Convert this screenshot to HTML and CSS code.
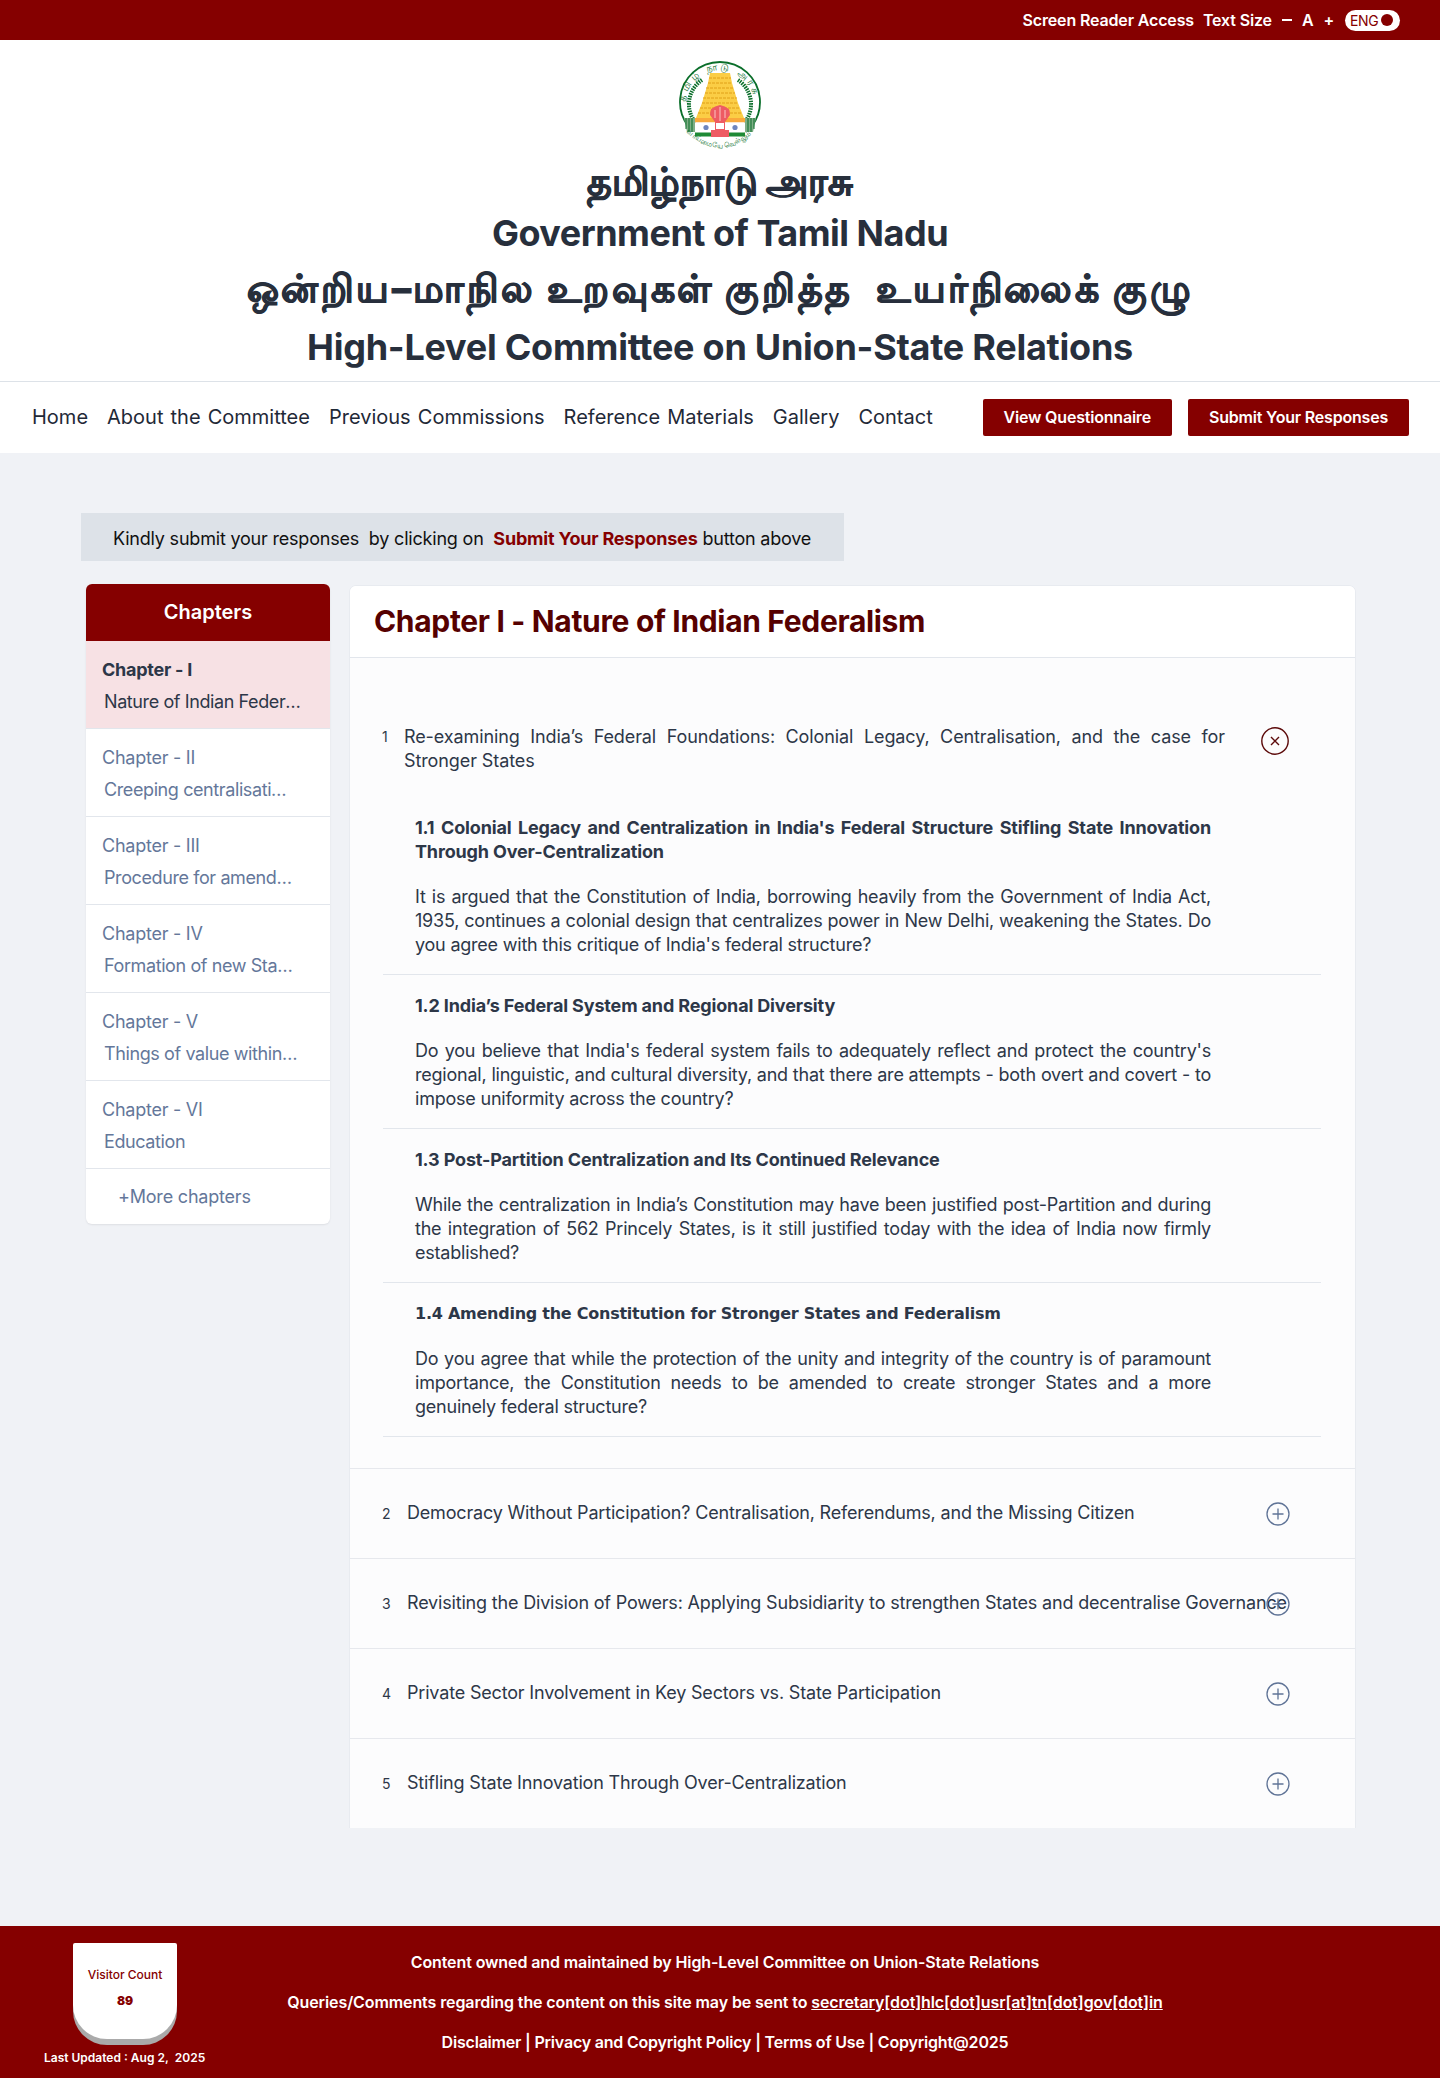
FILE: index.html
```html
<!DOCTYPE html>
<html lang="en">
<head>
  <meta charset="UTF-8">
  <meta name="viewport" content="width=device-width, initial-scale=1.0">
  <title>High-Level Committee on Union-State Relations</title>
  <link rel="stylesheet" href="styles.css">
</head>
<body>
  <div class="topbar">
    <a href="#">Screen Reader Access</a>
    <span class="size-label">Text Size</span>
    <span class="size-btn minus"></span>
    <span class="size-btn">A</span>
    <span class="size-btn">+</span>
    <span class="lang-toggle">ENG<i></i></span>
  </div>

  <header class="site-header">
    <svg class="emblem" viewBox="0 0 84 90" width="84" height="90" aria-hidden="true">
      <path d="M10 65 A40 40 0 1 1 74 65" fill="none" stroke="#0a6e2a" stroke-width="1.8"/>
      <path id="ring-top" d="M7 44 A35 35 0 0 1 77 44" fill="none"/>
      <text class="emblem-ring"><textPath href="#ring-top" startOffset="3%">தமிழ் நாடு அரசு</textPath></text>
      <path d="M15 58 A29 29 0 0 1 24 19 M69 58 A29 29 0 0 0 60 19" fill="none" stroke="#0a6e2a" stroke-width="4" stroke-dasharray="1.5 1"/>
      <path d="M6 57 H18 V71 H9 Z M66 57 H78 L75 71 H66 Z" fill="#7fae86"/>
      <path d="M8 57 V68 M11 57 V71 M14 57 V71 M70 57 V71 M73 57 V71 M76 57 V68" stroke="#0a6e2a" stroke-width="1"/>
      <path d="M32 12 H52 L54 22 L60 42 L66 57 H18 L24 42 L30 22 Z" fill="#fbcd45"/>
      <path d="M31 17 H53 M30 22 H54 M28 27 H56 M27 32 H57 M25 37 H59 M24 42 H60 M22 47 H62 M20 52 H64" stroke="#e0a019" stroke-width="1" stroke-dasharray="3 1"/>
      <rect x="17" y="57" width="50" height="4.5" fill="#f9a93b"/>
      <rect x="17" y="61.5" width="50" height="10" fill="#fff"/>
      <rect x="17" y="71.5" width="50" height="4" fill="#1e8a35"/>
      <circle cx="28" cy="66.5" r="2.6" fill="#6f86bd"/>
      <circle cx="57" cy="66.5" r="2.6" fill="#6f86bd"/>
      <path d="M32 54 Q31 46 42 44 Q53 46 52 54 L47 61 V69 H51 V76 H33 V69 H37 V61 Z" fill="#ee5b63"/>
      <path d="M37 49 V57 M42 46 V60 M47 49 V57" stroke="#f9b4b4" stroke-width="1.2"/>
      <rect x="38" y="62" width="8" height="6" fill="#fff"/>
      <path id="motto" d="M7 70 Q42 104 77 70" fill="none"/>
      <text class="emblem-motto"><textPath href="#motto" startOffset="2%">வாய்மையே வெல்லும்</textPath></text>
    </svg>
    <h1 class="title-ta first">தமிழ்நாடு அரசு</h1>
    <h1 class="title-en gov">Government of Tamil Nadu</h1>
    <h1 class="title-ta long">ஒன்றிய–மாநில உறவுகள் குறித்த&nbsp; உயர்நிலைக் குழு</h1>
    <h1 class="title-en hlc">High-Level Committee on Union-State Relations</h1>
  </header>

  <nav class="main-nav">
    <div class="nav-links">
      <a href="#">Home</a>
      <a href="#">About the Committee</a>
      <a href="#">Previous Commissions</a>
      <a href="#">Reference Materials</a>
      <a href="#">Gallery</a>
      <a href="#">Contact</a>
    </div>
    <div class="nav-actions">
      <a class="btn" href="#">View Questionnaire</a>
      <a class="btn" href="#">Submit Your Responses</a>
    </div>
  </nav>

  <main class="page">
    <p class="notice">Kindly submit your responses&nbsp; by clicking on&nbsp; <strong>Submit Your Responses</strong> button above</p>

    <div class="content-row">
      <aside class="chapters">
        <h3 class="chapters-head">Chapters</h3>
        <a class="chapter active" href="#"><b>Chapter - I</b><span>Nature of Indian Federalism</span></a>
        <a class="chapter" href="#"><b>Chapter - II</b><span class="short">Creeping centralisation of power</span></a>
        <a class="chapter" href="#"><b>Chapter - III</b><span>Procedure for amendment</span></a>
        <a class="chapter" href="#"><b>Chapter - IV</b><span class="short">Formation of new States and boundaries</span></a>
        <a class="chapter" href="#"><b>Chapter - V</b><span class="mid">Things of value within States</span></a>
        <a class="chapter" href="#"><b>Chapter - VI</b><span>Education</span></a>
        <a class="more" href="#">+More chapters</a>
      </aside>

      <section class="panel">
        <h2 class="panel-title">Chapter I - Nature of Indian Federalism</h2>
        <div class="panel-body">
          <div class="acc-open">
            <div class="acc-head first">
              <span class="num">1</span>
              <p class="acc-text">Re-examining India’s Federal Foundations: Colonial Legacy, Centralisation, and the case for Stronger States</p>
              <svg class="acc-icon close" viewBox="0 0 28 28" width="28" height="28"><circle cx="14" cy="14" r="13.2" fill="none" stroke="#5c0a0a" stroke-width="1.4"/><path d="M10 10 L18 18 M18 10 L10 18" stroke="#5c0a0a" stroke-width="1.4"/></svg>
            </div>
            <div class="question">
              <h4>1.1 Colonial Legacy and Centralization in India's Federal Structure Stifling State Innovation Through Over-Centralization</h4>
              <p>It is argued that the Constitution of India, borrowing heavily from the Government of India Act, 1935, continues a colonial design that centralizes power in New Delhi, weakening the States. Do you agree with this critique of India's federal structure?</p>
            </div>
            <div class="question">
              <h4>1.2 India’s Federal System and Regional Diversity</h4>
              <p>Do you believe that India's federal system fails to adequately reflect and protect the country's regional, linguistic, and cultural diversity, and that there are attempts - both overt and covert - to impose uniformity across the country?</p>
            </div>
            <div class="question">
              <h4>1.3 Post-Partition Centralization and Its Continued Relevance</h4>
              <p>While the centralization in India’s Constitution may have been justified post-Partition and during the integration of 562 Princely States, is it still justified today with the idea of India now firmly established?</p>
            </div>
            <div class="question">
              <h4 class="wide">1.4 Amending the Constitution for Stronger States and Federalism</h4>
              <p>Do you agree that while the protection of the unity and integrity of the country is of paramount importance, the Constitution needs to be amended to create stronger States and a more genuinely federal structure?</p>
            </div>
          </div>

          <div class="acc-head">
            <span class="num">2</span>
            <p class="acc-label">Democracy Without Participation? Centralisation, Referendums, and the Missing Citizen</p>
            <svg class="acc-icon" viewBox="0 0 24 24" width="24" height="24"><circle cx="12" cy="12" r="11" fill="none" stroke="#5f7396" stroke-width="1.3"/><path d="M12 6.5 V17.5 M6.5 12 H17.5" stroke="#5f7396" stroke-width="1.3"/></svg>
          </div>
          <div class="acc-head">
            <span class="num">3</span>
            <p class="acc-label">Revisiting the Division of Powers: Applying Subsidiarity to strengthen States and decentralise Governance</p>
            <svg class="acc-icon" viewBox="0 0 24 24" width="24" height="24"><circle cx="12" cy="12" r="11" fill="none" stroke="#5f7396" stroke-width="1.3"/><path d="M12 6.5 V17.5 M6.5 12 H17.5" stroke="#5f7396" stroke-width="1.3"/></svg>
          </div>
          <div class="acc-head">
            <span class="num">4</span>
            <p class="acc-label">Private Sector Involvement in Key Sectors vs. State Participation</p>
            <svg class="acc-icon" viewBox="0 0 24 24" width="24" height="24"><circle cx="12" cy="12" r="11" fill="none" stroke="#5f7396" stroke-width="1.3"/><path d="M12 6.5 V17.5 M6.5 12 H17.5" stroke="#5f7396" stroke-width="1.3"/></svg>
          </div>
          <div class="acc-head">
            <span class="num">5</span>
            <p class="acc-label">Stifling State Innovation Through Over-Centralization</p>
            <svg class="acc-icon" viewBox="0 0 24 24" width="24" height="24"><circle cx="12" cy="12" r="11" fill="none" stroke="#5f7396" stroke-width="1.3"/><path d="M12 6.5 V17.5 M6.5 12 H17.5" stroke="#5f7396" stroke-width="1.3"/></svg>
          </div>
        </div>
      </section>
    </div>
  </main>

  <footer class="site-footer">
    <div class="visitor">
      <div class="visitor-card">
        <span>Visitor Count</span>
        <b>89</b>
      </div>
      <p class="updated">Last Updated : Aug 2,&nbsp; 2025</p>
    </div>
    <div class="footer-text">
      <p>Content owned and maintained by High-Level Committee on Union-State Relations</p>
      <p>Queries/Comments regarding the content on this site may be sent to <a href="#">secretary[dot]hlc[dot]usr[at]tn[dot]gov[dot]in</a></p>
      <p class="legal">Disclaimer | Privacy and Copyright Policy | Terms of Use | Copyright@2025</p>
    </div>
  </footer>
</body>
</html>
```

FILE: styles.css
```css
* {
  box-sizing: border-box;
}
body {
  margin: 0;
  font-family: Inter, "Noto Sans", sans-serif;
  background-color: #f0f2f6;
  color: #2d3748;
}
a {
  text-decoration: none;
  color: inherit;
}

.topbar {
  height: 40px;
  background-color: #850000;
  color: white;
  display: flex;
  justify-content: flex-end;
  align-items: center;
  padding-right: 40px;
  font-size: 16px;
  font-weight: 600;
  letter-spacing: -0.15px;
}
.size-label {
  margin-left: 9px;
}
.size-btn {
  margin-left: 10px;
  font-size: 16px;
}
.size-btn.minus {
  width: 10px;
  height: 2px;
  background-color: white;
}
.lang-toggle {
  margin-left: 11px;
  width: 55px;
  height: 21px;
  border-radius: 11px;
  background-color: white;
  color: #850000;
  font-size: 14px;
  font-weight: 400;
  letter-spacing: -0.4px;
  display: flex;
  align-items: center;
  padding-left: 5px;
  gap: 3px;
}
.lang-toggle i {
  width: 12px;
  height: 12px;
  border-radius: 50%;
  background-color: #850000;
}

.site-header {
  height: 342px;
  background-color: white;
  text-align: center;
  padding-top: 21px;
  border-bottom: 1px solid #dde2e8;
}
.emblem {
  display: block;
  margin: 0 auto;
}
.emblem-ring {
  font-size: 9.5px;
  letter-spacing: 2.6px;
  fill: #0a6e2a;
}
.emblem-motto {
  font-size: 7px;
  fill: #0a6e2a;
}
.site-header h1 {
  margin: 0;
  font-size: 36px;
  line-height: 50px;
  font-weight: 700;
  color: #272f3c;
}
.title-ta {
  -webkit-text-stroke: 1px #272f3c;
}
.site-header .first {
  margin-top: 5px;
  font-size: 38px;
}
.site-header .gov {
  margin-top: 2px;
  letter-spacing: -0.5px;
}
.site-header .long {
  margin-top: 5px;
  font-size: 38px;
  letter-spacing: 2.6px;
}
.site-header .hlc {
  margin-top: 9px;
  letter-spacing: -0.25px;
}

.main-nav {
  height: 71px;
  background-color: white;
  display: flex;
  justify-content: space-between;
  align-items: center;
  padding: 0 31px 0 32px;
}
.nav-links {
  display: flex;
  gap: 19px;
  font-size: 20px;
  word-spacing: 1.5px;
  color: #1f2937;
  margin-top: -2px;
}
.nav-actions {
  display: flex;
  gap: 16px;
}
.btn {
  display: block;
  height: 37px;
  line-height: 37px;
  padding: 0 21px;
  background-color: #850000;
  color: white;
  font-size: 16px;
  font-weight: 600;
  border-radius: 2px;
  letter-spacing: -0.2px;
}

.page {
  padding: 60px 84px 98px 81px;
}
.notice {
  width: 763px;
  height: 48px;
  margin: 0 0 23px;
  background-color: #dde2e8;
  padding: 3px 0 0 32px;
  line-height: 45px;
  font-size: 18px;
  color: #111;
  letter-spacing: -0.2px;
}
.notice strong {
  color: #850000;
}

.content-row {
  display: flex;
  align-items: flex-start;
  gap: 20px;
  padding-left: 5px;
}
.chapters {
  width: 244px;
  background-color: white;
  border-radius: 6px;
  box-shadow: 0 1px 2px rgba(0, 0, 0, 0.08);
  overflow: hidden;
}
.chapters-head {
  margin: 0;
  height: 57px;
  line-height: 56px;
  background-color: #850000;
  color: white;
  font-size: 20px;
  font-weight: 600;
  text-align: center;
}
.chapter {
  display: block;
  height: 88px;
  padding: 13px 16px 0;
  border-bottom: 1px solid #e2e6ec;
  color: #64779a;
  font-size: 18px;
  line-height: 32px;
  letter-spacing: -0.25px;
}
.chapter b {
  display: block;
  font-weight: 400;
}
.chapter span {
  display: block;
  overflow: hidden;
  white-space: nowrap;
  text-overflow: ellipsis;
  padding-left: 2px;
  width: 202px;
  letter-spacing: -0.4px;
}
.chapter span.short {
  width: 192px;
}
.chapter span.mid {
  width: 197px;
}
.chapter.active {
  background-color: #f7e1e4;
  color: #2d3748;
}
.chapter.active b {
  font-weight: 700;
}
.more {
  display: block;
  height: 55px;
  line-height: 55px;
  padding-left: 32px;
  color: #64779a;
  font-size: 18px;
  letter-spacing: -0.2px;
}

.panel {
  width: 1005px;
  margin-top: 2px;
  background-color: #fcfcfd;
  border-radius: 6px 6px 0 0;
  box-shadow: 1px 0 0 #e8ebf0, 0 -1px 0 #e8ebf0, -1px 0 0 #e8ebf0;
}
.panel-title {
  margin: 0;
  height: 72px;
  line-height: 70px;
  padding-left: 24px;
  background-color: white;
  border-bottom: 1px solid #e2e6ec;
  border-radius: 6px 6px 0 0;
  font-size: 30px;
  font-weight: 700;
  color: #560000;
  letter-spacing: -0.33px;
}
.acc-open {
  padding: 67px 0 12px;
}
.acc-head {
  position: relative;
  display: flex;
  align-items: center;
  height: 90px;
  padding-left: 32px;
  border-top: 1px solid #e6e8ed;
  color: #2d3748;
  font-size: 18px;
}
.acc-head.first {
  height: auto;
  border-top: none;
  align-items: flex-start;
  padding-bottom: 43px;
}
.num {
  width: 22px;
  font-size: 14px;
  flex: none;
}
.acc-head.first .num {
  line-height: 24px;
}
.acc-text {
  margin: 0;
  width: 821px;
  line-height: 24px;
  text-align: justify;
  letter-spacing: -0.1px;
}
.acc-label {
  margin: 0 0 0 3px;
  white-space: nowrap;
  letter-spacing: -0.18px;
  padding-bottom: 3px;
}
.acc-icon {
  position: absolute;
  left: 916px;
  top: 33px;
}
.acc-icon.close {
  left: 911px;
  top: 2px;
}
.question {
  margin: 0 34px 19px 33px;
  padding: 0 110px 17px 32px;
  border-bottom: 1px solid #e2e6ec;
}
.question h4 {
  margin: 0 0 21px;
  font-size: 18px;
  line-height: 24px;
  font-weight: 700;
  color: #2d3748;
  text-align: justify;
  letter-spacing: -0.15px;
}
.question h4.wide {
  font-family: "DejaVu Sans", sans-serif;
  font-size: 16px;
  letter-spacing: -0.25px;
}
.question p {
  margin: 0;
  font-size: 18px;
  line-height: 24px;
  text-align: justify;
  color: #2d3748;
  letter-spacing: -0.22px;
}

.site-footer {
  height: 153px;
  background-color: #850000;
  color: white;
  display: flex;
  font-weight: 600;
}
.visitor {
  width: 250px;
  padding: 17px 0 0 44px;
  flex: none;
}
.visitor-card {
  width: 104px;
  height: 96px;
  margin-left: 29px;
  background-color: white;
  border-radius: 2px 2px 34px 34px;
  box-shadow: 0 6px 0 #aaa;
  color: #850000;
  font-size: 12px;
  text-align: center;
  padding-top: 24px;
}
.visitor-card span {
  display: block;
  font-weight: 500;
}
.visitor-card b {
  display: block;
  margin-top: 11px;
  font-size: 12px;
}
.updated {
  margin: 11px 0 0;
  font-size: 12px;
  white-space: nowrap;
}
.footer-text {
  width: 950px;
  text-align: center;
  font-size: 16px;
  letter-spacing: -0.1px;
  padding-top: 27px;
}
.footer-text p {
  margin: 0 0 21px;
  line-height: 19px;
}
.footer-text .legal {
  letter-spacing: -0.2px;
}
.footer-text a {
  text-decoration: underline;
}
```
